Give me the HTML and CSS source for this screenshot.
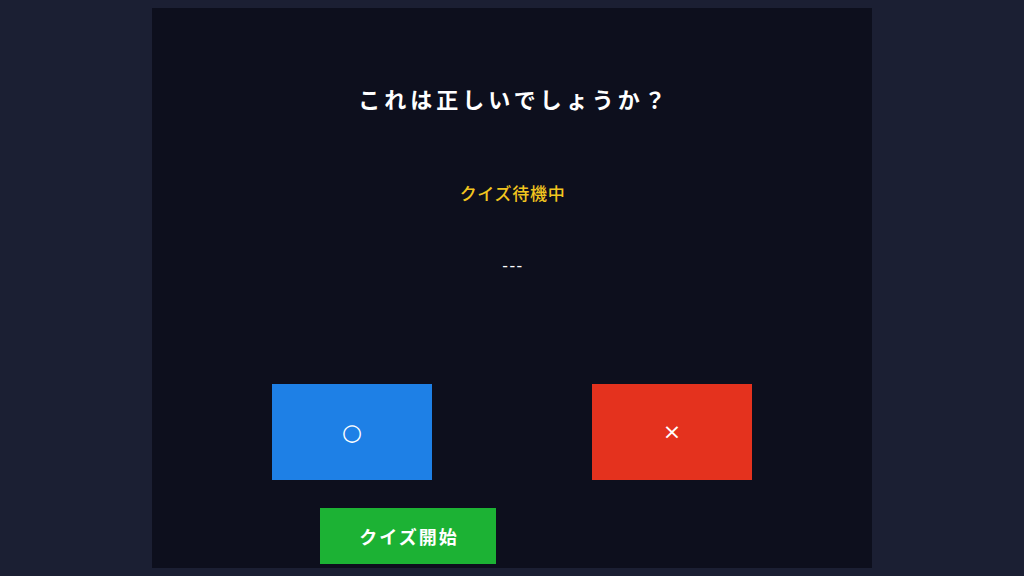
FILE: index.html
```html
<!DOCTYPE html>
<html lang="ja">
<head>
<meta charset="utf-8">
<title>クイズ</title>
<link rel="stylesheet" href="styles.css">
</head>
<body>
<main class="panel">
  <h1 class="question">これは正しいでしょうか？</h1>
  <p class="status">クイズ待機中</p>
  <p class="answer">---</p>
  <div class="choices">
    <button class="choice choice-yes">○</button>
    <button class="choice choice-no">×</button>
  </div>
  <div class="controls">
    <button class="start">クイズ開始</button>
  </div>
</main>
</body>
</html>
```
FILE: styles.css
```css
html, body {
  margin: 0;
  padding: 0;
}
body {
  background: #1b1f33;
  width: 1024px;
  height: 576px;
  overflow: hidden;
  font-family: "Noto Sans CJK JP", "Noto Sans", sans-serif;
  color: #ffffff;
}
.panel {
  box-sizing: border-box;
  width: 720px;
  height: 560px;
  margin: 8px auto 0;
  background: #0d0f1d;
  padding-top: 75px;
  overflow: hidden;
}
.question {
  margin: 0;
  padding-left: 4px;
  font-size: 22px;
  line-height: 30px;
  font-weight: 700;
  letter-spacing: 4px;
  text-align: center;
}
.status {
  margin: 68px 0 0;
  padding-left: 1px;
  font-size: 17px;
  line-height: 24px;
  font-weight: 500;
  letter-spacing: 0.7px;
  color: #f2c51f;
  text-align: center;
}
.answer {
  margin: 49px 0 0;
  padding-left: 2px;
  font-family: "Liberation Sans", sans-serif;
  font-size: 17px;
  line-height: 24px;
  text-align: center;
  letter-spacing: 1.5px;
}
.choices {
  margin-top: 106px;
  display: flex;
  justify-content: center;
  gap: 160px;
}
.choice {
  width: 160px;
  height: 96px;
  border: none;
  padding: 0;
  color: #ffffff;
  font-family: "DejaVu Sans", sans-serif;
  font-size: 23px;
  line-height: 1;
  display: flex;
  align-items: center;
  justify-content: center;
}
.choice-yes {
  background: #1e80e6;
}
.choice-no {
  background: #e4321e;
  font-size: 22px;
}
.controls {
  margin-top: 28px;
  padding-left: 168px;
  display: flex;
}
.start {
  width: 176px;
  height: 56px;
  border: none;
  padding: 0 0 0 2px;
  background: #1cb234;
  color: #ffffff;
  font-family: "Noto Sans CJK JP", sans-serif;
  font-size: 18px;
  font-weight: 700;
  letter-spacing: 2px;
}
```
